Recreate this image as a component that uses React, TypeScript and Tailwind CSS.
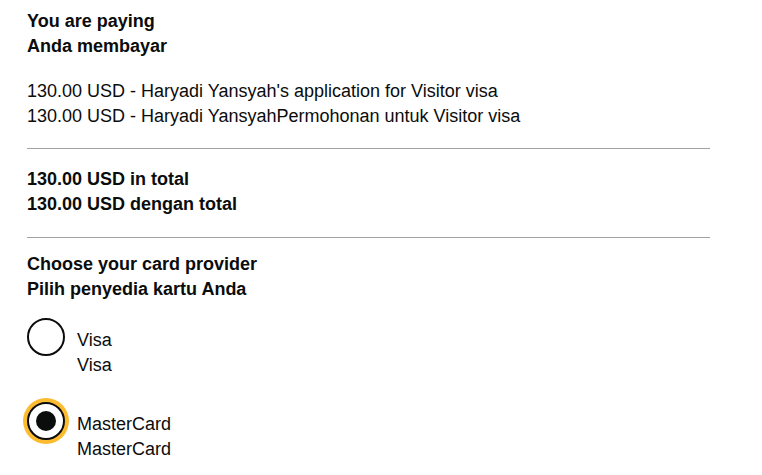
import React from 'react';

const font = { fontFamily: '"Liberation Sans", Arial, sans-serif' };

function Radio({ checked, label, sub }: { checked?: boolean; label: string; sub: string }) {
  return (
    <div className="flex items-start">
      <div
        className={
          'w-[38px] h-[38px] rounded-full border-2 border-[#0b0c0c] bg-white flex items-center justify-center shrink-0 mt-[-1px] ' +
          (checked ? 'shadow-[0_0_0_4px_#fdbb30]' : '')
        }
      >
        {checked && <div className="w-[20px] h-[20px] rounded-full bg-[#0b0c0c]" />}
      </div>
      <div className="pl-[12px] pt-[9px] text-[18px] leading-[25px] text-[#0b0c0c]">
        <div>{label}</div>
        <div>{sub}</div>
      </div>
    </div>
  );
}

export default function App() {
  return (
    <div className="bg-white min-h-[475px] px-[27px] pt-[9px] text-[#0b0c0c]" style={font}>
      <div className="w-[683px]">
        <div className="font-bold text-[18px] leading-[25px]">
          <div>You are paying</div>
          <div>Anda membayar</div>
        </div>
        <div className="mt-[20px] text-[18px] leading-[25px]">
          <div>130.00 USD - Haryadi Yansyah's application for Visitor visa</div>
          <div>130.00 USD - Haryadi YansyahPermohonan untuk Visitor visa</div>
        </div>
        <hr className="mt-[19px] border-0 border-t border-[#a3a3a3]" />
        <div className="mt-[18px] font-bold text-[18px] leading-[25px]">
          <div>130.00 USD in total</div>
          <div>130.00 USD dengan total</div>
        </div>
        <hr className="mt-[20px] border-0 border-t border-[#a3a3a3]" />
        <div className="mt-[14px] font-bold text-[18px] leading-[25px]">
          <div>Choose your card provider</div>
          <div>Pilih penyedia kartu Anda</div>
        </div>
        <div className="mt-[17px] flex flex-col gap-[25px]">
          <Radio label="Visa" sub="Visa" />
          <Radio checked label="MasterCard" sub="MasterCard" />
        </div>
      </div>
    </div>
  );
}
